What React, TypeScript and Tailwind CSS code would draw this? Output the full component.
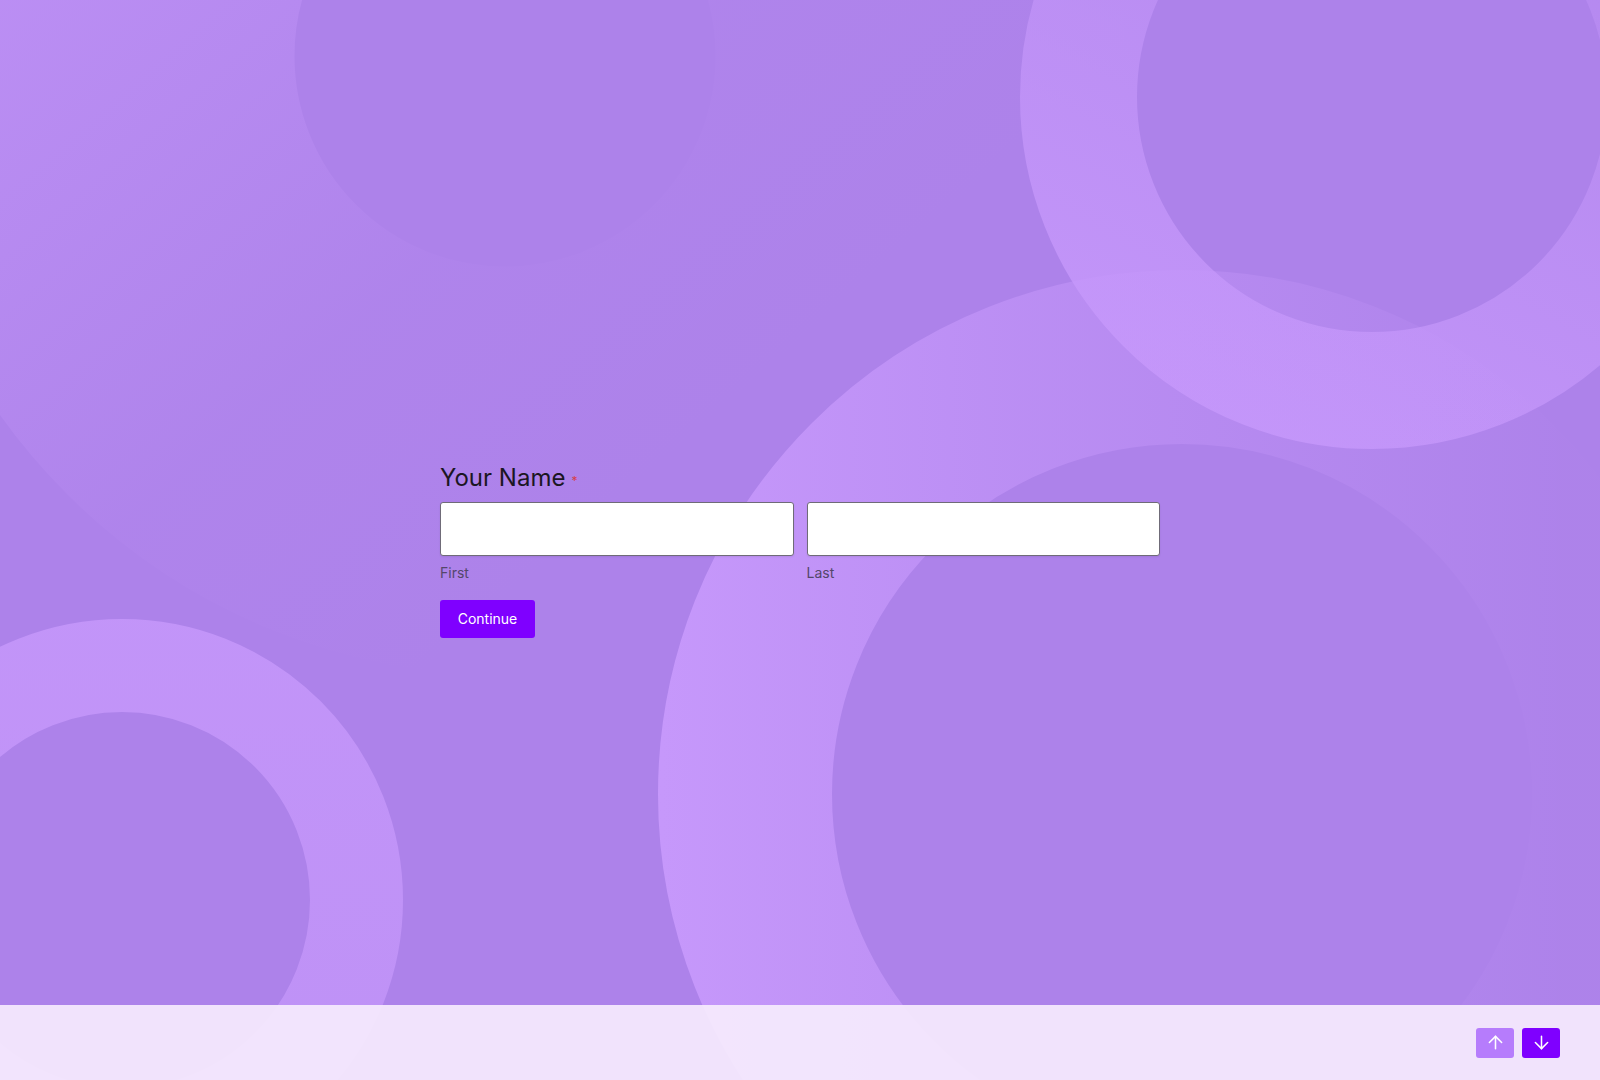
import React from "react";
import { ArrowUp, ArrowDown } from "lucide-react";

function Background() {
  return (
    <svg
      className="absolute inset-0 h-full w-full"
      viewBox="0 0 1600 1080"
      preserveAspectRatio="none"
      aria-hidden="true"
    >
      <defs>
        <linearGradient id="g1" gradientUnits="userSpaceOnUse" x1="0" y1="0" x2="700" y2="800">
          <stop offset="0" stopColor="#c698fb" stopOpacity="0.55" />
          <stop offset="0.45" stopColor="#c698fb" stopOpacity="0.08" />
          <stop offset="0.75" stopColor="#c698fb" stopOpacity="0" />
        </linearGradient>
        <linearGradient id="g2" gradientUnits="userSpaceOnUse" x1="1250" y1="420" x2="1560" y2="-150">
          <stop offset="0" stopColor="#c698fb" stopOpacity="0.85" />
          <stop offset="1" stopColor="#c698fb" stopOpacity="0.25" />
        </linearGradient>
        <linearGradient id="g3" gradientUnits="userSpaceOnUse" x1="660" y1="0" x2="1560" y2="0">
          <stop offset="0" stopColor="#c698fb" stopOpacity="1" />
          <stop offset="0.4" stopColor="#c698fb" stopOpacity="0.55" />
          <stop offset="1" stopColor="#c698fb" stopOpacity="0.02" />
        </linearGradient>
        <linearGradient id="g4" gradientUnits="userSpaceOnUse" x1="122" y1="620" x2="122" y2="1080">
          <stop offset="0" stopColor="#c698fb" stopOpacity="0.85" />
          <stop offset="1" stopColor="#c698fb" stopOpacity="0.7" />
        </linearGradient>
      </defs>
      <circle cx="505" cy="56" r="415" fill="none" stroke="url(#g1)" strokeWidth="409" />
      <circle cx="1372" cy="97" r="293.5" fill="none" stroke="url(#g2)" strokeWidth="117" />
      <circle cx="1182" cy="794" r="437" fill="none" stroke="url(#g3)" strokeWidth="174" />
      <circle cx="122" cy="900" r="234.5" fill="none" stroke="url(#g4)" strokeWidth="93" />
    </svg>
  );
}

export default function App() {
  return (
    <div
      className="relative flex h-screen w-full flex-col overflow-hidden bg-[#ad82ea]"
      style={{ fontFamily: "Inter, 'Noto Sans', sans-serif" }}
    >
      <Background />
      <main className="relative flex-1">
        <div className="mx-auto w-[720px] pt-[462px]">
          <div className="flex items-start">
            <h1 className="text-[24px] leading-[32px] font-normal text-[#1b1622]">Your Name</h1>
            <span className="ml-[6px] mt-[11px] text-[12px] leading-[16px] text-[#d83f4a]">*</span>
          </div>
          <div className="mt-[8px] flex gap-[13px]">
            <div className="flex flex-1 flex-col">
              <input
                type="text"
                className="h-[54px] w-full rounded-[3px] border border-[#6f6b78] bg-white px-3 outline-none shadow-[0_1px_2px_rgba(0,0,0,0.08)]"
              />
              <label className="mt-[7px] text-[14px] leading-[20px] text-[#54476a]">First</label>
            </div>
            <div className="flex flex-1 flex-col">
              <input
                type="text"
                className="h-[54px] w-full rounded-[3px] border border-[#6f6b78] bg-white px-3 outline-none shadow-[0_1px_2px_rgba(0,0,0,0.08)]"
              />
              <label className="mt-[7px] text-[14px] leading-[20px] text-[#54476a]">Last</label>
            </div>
          </div>
          <button className="mt-[17px] h-[38px] w-[95px] rounded-[3px] bg-[#7f00ff] text-[14px] font-normal leading-[20px] text-white">
            Continue
          </button>
        </div>
      </main>
      <footer className="relative flex h-[75px] items-center justify-end gap-[8px] bg-[#f6ebfd]/92 pr-[40px]">
        <button className="flex h-[30px] w-[38px] items-center justify-center rounded-[3px] bg-[#b67cfc] text-white">
          <ArrowUp size={21} strokeWidth={1.75} />
        </button>
        <button className="flex h-[30px] w-[38px] items-center justify-center rounded-[3px] bg-[#7f00ff] text-white">
          <ArrowDown size={21} strokeWidth={1.75} />
        </button>
      </footer>
    </div>
  );
}
